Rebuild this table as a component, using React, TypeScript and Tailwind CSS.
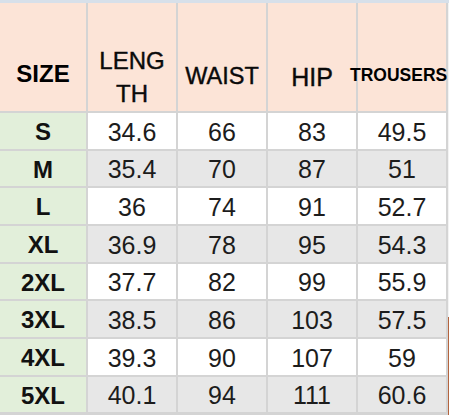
import React from "react";

const rows: [string, string, string, string, string][] = [
  ["S", "34.6", "66", "83", "49.5"],
  ["M", "35.4", "70", "87", "51"],
  ["L", "36", "74", "91", "52.7"],
  ["XL", "36.9", "78", "95", "54.3"],
  ["2XL", "37.7", "82", "99", "55.9"],
  ["3XL", "38.5", "86", "103", "57.5"],
  ["4XL", "39.3", "90", "107", "59"],
  ["5XL", "40.1", "94", "111", "60.6"],
];

const heights = ["h-[36px]", "h-[35px]", "h-[36px]", "h-[36px]", "h-[35px]", "h-[36px]", "h-[36px]", "h-[35px]"];

export default function App() {
  return (
    <div className="w-[449px] h-[415px] overflow-hidden bg-white relative" style={{ fontFamily: '"Liberation Sans", Arial, sans-serif' }}>
      <div className="h-[3px] bg-[#d7e0ea]" />
      <div className="flex">
        <div className="bg-[#d4d4d4] pr-[2px] pb-[3px]">
          <div className="grid grid-cols-[86px_88px_88px_88px_88px] gap-[2px]">
            <div className="h-[108px] bg-[#fce4d7] flex items-center justify-center pt-[34px]">
              <span className="text-[24px] font-bold text-black">SIZE</span>
            </div>
            <div className="h-[108px] bg-[#fce4d7] flex flex-col items-center justify-center pt-[39px] leading-[33px] text-[24px] text-[#0a0a0a] [-webkit-text-stroke:0.4px_#0a0a0a]">
              <span>LENG</span>
              <span>TH</span>
            </div>
            <div className="h-[108px] bg-[#fce4d7] flex items-center justify-center pt-[39px]">
              <span className="text-[23.5px] text-[#0a0a0a] [-webkit-text-stroke:0.4px_#0a0a0a]">WAIST</span>
            </div>
            <div className="h-[108px] bg-[#fce4d7] flex items-center justify-center pt-[41px]">
              <span className="text-[25px] text-[#0a0a0a] [-webkit-text-stroke:0.4px_#0a0a0a]">HIP</span>
            </div>
            <div className="h-[108px] bg-[#fce4d7] flex items-center justify-start pt-[36px] overflow-visible">
              <span className="text-[17.5px] font-bold text-black whitespace-nowrap -ml-[8px]">TROUSERS</span>
            </div>
            {rows.map((r, i) => {
              const bg = i % 2 === 0 ? "bg-white" : "bg-[#e7e7e7]";
              const h = heights[i];
              return (
                <React.Fragment key={r[0]}>
                  <div className={`${h} bg-[#e2efda] flex items-center justify-center pt-[2px]`}>
                    <span className="text-[24px] font-bold text-[#111]">{r[0]}</span>
                  </div>
                  {r.slice(1).map((v, j) => (
                    <div key={j} className={`${h} ${bg} flex items-center justify-center pt-[3px]`}>
                      <span className="text-[25px] text-[#1c1c1c]">{v}</span>
                    </div>
                  ))}
                </React.Fragment>
              );
            })}
          </div>
        </div>
        <div className="w-[1px] flex flex-col">
          <div className="h-[314px] bg-[#f3f3f3]" />
          <div className="flex-1 bg-[#b3643e]" />
        </div>
      </div>
    </div>
  );
}
